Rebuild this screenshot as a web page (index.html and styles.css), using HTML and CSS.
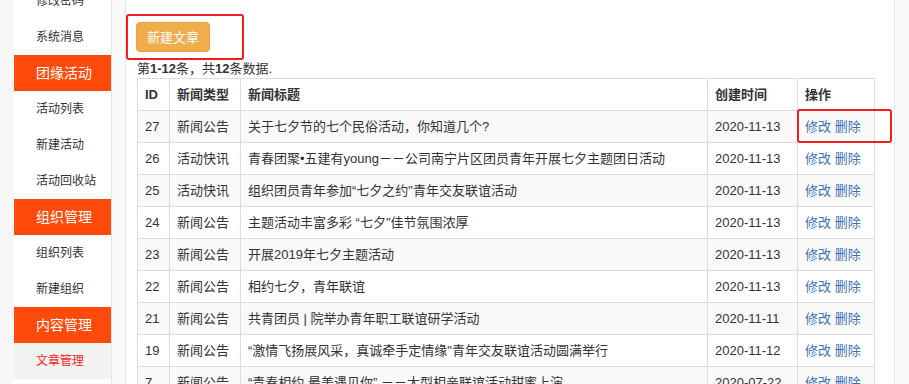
FILE: index.html
```html
<!DOCTYPE html>
<html lang="zh">
<head>
<meta charset="utf-8">
<title>文章管理</title>
<link rel="stylesheet" href="styles.css">
</head>
<body>
<div class="page">
  <div class="gutter"></div>
  <nav class="sidebar">
    <ul class="menu">
      <li class="sub">修改密码</li>
      <li class="sub">系统消息</li>
      <li class="head">团缘活动</li>
      <li class="sub">活动列表</li>
      <li class="sub">新建活动</li>
      <li class="sub">活动回收站</li>
      <li class="head">组织管理</li>
      <li class="sub">组织列表</li>
      <li class="sub">新建组织</li>
      <li class="head">内容管理</li>
      <li class="sub active">文章管理</li>
      <li class="sub">文章回收站</li>
    </ul>
  </nav>
  <div class="spacer"></div>
  <main class="main">
    <button class="btn-warning" type="button">新建文章</button>
    <div class="summary">第<b>1-12</b>条，共<b>12</b>条数据.</div>
    <table class="grid">
      <colgroup>
        <col class="c-id"><col class="c-type"><col class="c-title"><col class="c-date"><col class="c-op">
      </colgroup>
      <thead>
        <tr><th>ID</th><th>新闻类型</th><th>新闻标题</th><th>创建时间</th><th>操作</th></tr>
      </thead>
      <tbody>
        <tr><td class="num">27</td><td>新闻公告</td><td>关于七夕节的七个民俗活动，你知道几个?</td><td class="num">2020-11-13</td><td><a href="#">修改</a> <a href="#">删除</a></td></tr>
        <tr><td class="num">26</td><td>活动快讯</td><td>青春团聚•五建有young－－公司南宁片区团员青年开展七夕主题团日活动</td><td class="num">2020-11-13</td><td><a href="#">修改</a> <a href="#">删除</a></td></tr>
        <tr><td class="num">25</td><td>活动快讯</td><td>组织团员青年参加“七夕之约"青年交友联谊活动</td><td class="num">2020-11-13</td><td><a href="#">修改</a> <a href="#">删除</a></td></tr>
        <tr><td class="num">24</td><td>新闻公告</td><td>主题活动丰富多彩 “七夕"佳节氛围浓厚</td><td class="num">2020-11-13</td><td><a href="#">修改</a> <a href="#">删除</a></td></tr>
        <tr><td class="num">23</td><td>新闻公告</td><td>开展2019年七夕主题活动</td><td class="num">2020-11-13</td><td><a href="#">修改</a> <a href="#">删除</a></td></tr>
        <tr><td class="num">22</td><td>新闻公告</td><td>相约七夕，青年联谊</td><td class="num">2020-11-13</td><td><a href="#">修改</a> <a href="#">删除</a></td></tr>
        <tr><td class="num">21</td><td>新闻公告</td><td>共青团员 | 院举办青年职工联谊研学活动</td><td class="num">2020-11-11</td><td><a href="#">修改</a> <a href="#">删除</a></td></tr>
        <tr><td class="num">19</td><td>新闻公告</td><td>“激情飞扬展风采，真诚牵手定情缘"青年交友联谊活动圆满举行</td><td class="num">2020-11-12</td><td><a href="#">修改</a> <a href="#">删除</a></td></tr>
        <tr><td class="num">7</td><td>新闻公告</td><td>“青春相约 最美遇见你” －－大型相亲联谊活动甜蜜上演</td><td class="num">2020-07-22</td><td><a href="#">修改</a> <a href="#">删除</a></td></tr>
      </tbody>
    </table>
  </main>
  <div class="gutter-right"></div>
</div>
<div class="mark mark-btn"></div>
<div class="mark mark-op"></div>
</body>
</html>
```

FILE: styles.css
```css
html, body {
  margin: 0;
  padding: 0;
  height: 384px;
  overflow: hidden;
  background: #f8f8f8;
  font-family: "Liberation Sans", Arial, "Noto Sans CJK SC", sans-serif;
  color: #333;
}

.page {
  display: flex;
  align-items: stretch;
  height: 384px;
}

.gutter {
  width: 14px;
  flex: none;
  background: #f7f7f7;
}

.sidebar {
  width: 97px;
  flex: none;
  background: #fff;
  border-right: 1px solid #e6e6e6;
  overflow: hidden;
}

.menu {
  list-style: none;
  margin: -17px 0 0 0;
  padding: 0;
}

.menu li {
  height: 36px;
  line-height: 36px;
  padding-left: 22px;
  white-space: nowrap;
}

.menu .sub {
  font-size: 12px;
  color: #333;
}

.menu .head {
  font-size: 14px;
  color: #fff;
  background: #ff4a0b;
}

.menu .active {
  background: #f2f2f2;
  color: #ff1a1a;
}

.spacer {
  width: 13px;
  flex: none;
  background: #f9f9f9;
}

.main {
  width: 748px;
  flex: none;
  background: #fff;
  border-left: 1px solid #e6e6e6;
  border-right: 1px solid #e6e6e6;
  padding: 22px 10px 0 10px;
  display: flex;
  flex-direction: column;
  align-items: flex-start;
}

.gutter-right {
  flex: 1;
  background: #fafafa;
}

.btn-warning {
  font-family: inherit;
  font-size: 13px;
  line-height: 18px;
  height: 30px;
  padding: 6px 10px;
  color: #fff;
  background: #f0ad4e;
  border: 1px solid #eea236;
  border-radius: 4px;
  margin: 0;
}

.summary {
  margin-top: 8px;
  height: 18px;
  line-height: 18px;
  font-size: 13px;
  color: #333;
  padding-left: 1px;
}

.grid {
  margin-left: 1px;
  border-collapse: collapse;
  table-layout: fixed;
  width: 737px;
  font-size: 13px;
}

.c-id { width: 32px; }
.c-type { width: 71px; }
.c-title { width: 467px; }
.c-date { width: 90px; }
.c-op { width: 77px; }

.grid th,
.grid td {
  border: 1px solid #ddd;
  padding: 8px 7px;
  line-height: 15px;
  text-align: left;
  white-space: nowrap;
  overflow: hidden;
}

.grid th {
  font-weight: bold;
  color: #333;
}

.grid tbody tr:nth-child(odd) {
  background: #f9f9f9;
}

.grid a {
  color: #3b72b4;
  text-decoration: none;
}

.mark {
  position: absolute;
  border: 2px solid #f41c1c;
  border-radius: 3px;
  box-sizing: border-box;
}

.mark-btn {
  left: 126px;
  top: 14px;
  width: 118px;
  height: 46px;
}

.mark-op {
  left: 797px;
  top: 109px;
  width: 95px;
  height: 34px;
}
```
